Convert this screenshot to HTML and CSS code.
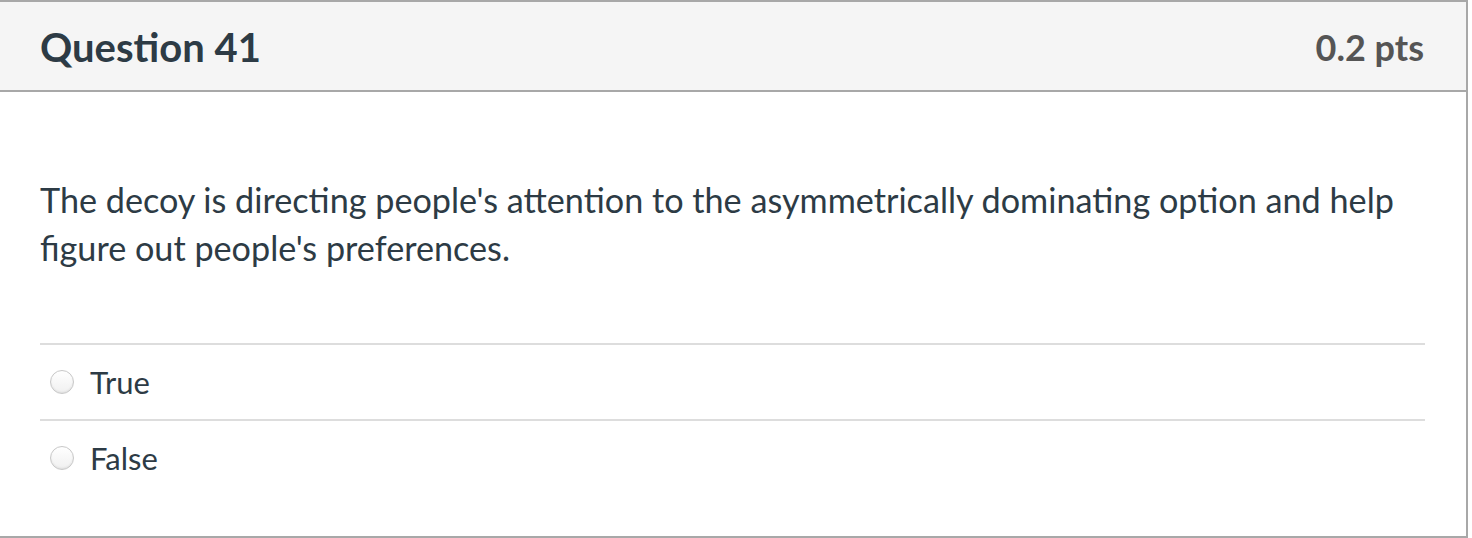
FILE: index.html
```html
<!DOCTYPE html>
<html>
<head>
<meta charset="utf-8">
<link rel="stylesheet" href="styles.css">
</head>
<body>
<div class="card">
  <div class="header">
    <div class="title">Question 41</div>
    <div class="pts">0.2 pts</div>
  </div>
  <div class="content">
    <p class="text">The decoy is directing people's attention to the asymmetrically dominating option and help figure out people's preferences.</p>
    <div class="answers">
      <label class="answer"><span class="radio"></span><span class="label">True</span></label>
      <label class="answer"><span class="radio"></span><span class="label">False</span></label>
    </div>
  </div>
</div>
</body>
</html>
```

FILE: styles.css
```css
html, body {
  margin: 0;
  padding: 0;
  background: #fff;
}
body {
  font-family: Lato, "Open Sans", sans-serif;
  color: #2d3b45;
}
.card {
  border: 2px solid #a8a8a8;
  border-left: 0;
  box-sizing: border-box;
  width: 1468px;
  height: 538px;
}
.header {
  height: 86px;
  background: #f5f5f5;
  border-bottom: 2px solid #a8a8a8;
  display: flex;
  align-items: center;
  justify-content: space-between;
  padding: 2px 42px 0 40px;
}
.title {
  font-weight: 700;
  font-size: 40px;
  color: #2d3b45;
}
.pts {
  font-weight: 700;
  font-size: 36px;
  color: #555;
}
.content {
  padding: 84px 41px 0 40px;
}
.text {
  margin: 0;
  font-size: 34.2px;
  line-height: 48px;
}
.answers {
  margin-top: 71px;
}
.answer {
  display: flex;
  align-items: center;
  height: 74px;
  border-top: 2px solid #ddd;
  font-size: 31px;
}
.radio {
  width: 22px;
  height: 22px;
  border-radius: 50%;
  border: 1px solid #c8c8c8;
  background: linear-gradient(#fff, #f0f0f0);
  box-shadow: inset 0 -1px 2px rgba(0,0,0,0.08);
  margin-left: 10px;
  margin-right: 16px;
  flex: none;
}
.label {
  line-height: 48px;
}
```
